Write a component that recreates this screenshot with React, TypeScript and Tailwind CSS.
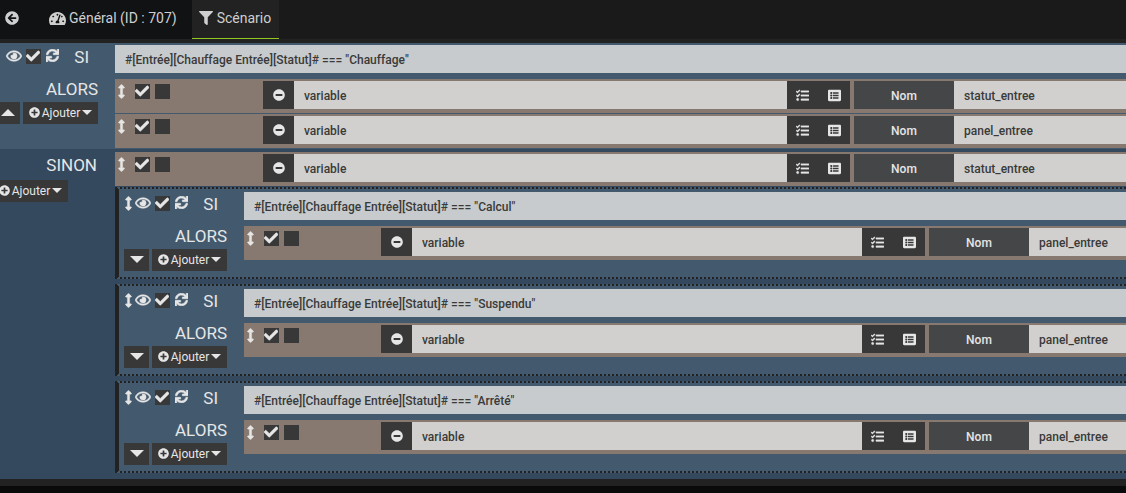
import { FaArrowCircleLeft, FaArrowsAltV, FaCheck, FaFilter, FaListAlt, FaMinusCircle, FaPlusCircle, FaRegEye, FaSync, FaTachometerAlt, FaTasks } from 'react-icons/fa';
import clsx from 'clsx';

interface Action {
  name: string;
  enabled: boolean;
}

interface Condition {
  id: string;
  expression: string;
  actions: Action[];
}

const mainCondition: Condition = {
  id: 'main',
  expression: '#[Entrée][Chauffage Entrée][Statut]# === "Chauffage"',
  actions: [
    { name: 'statut_entree', enabled: true },
    { name: 'panel_entree', enabled: true },
  ],
};

const subConditions: Condition[] = [
  {
    id: 'calcul',
    expression: '#[Entrée][Chauffage Entrée][Statut]# === "Calcul"',
    actions: [{ name: 'panel_entree', enabled: true }],
  },
  {
    id: 'suspendu',
    expression: '#[Entrée][Chauffage Entrée][Statut]# === "Suspendu"',
    actions: [{ name: 'panel_entree', enabled: true }],
  },
  {
    id: 'arrete',
    expression: '#[Entrée][Chauffage Entrée][Statut]# === "Arrêté"',
    actions: [{ name: 'panel_entree', enabled: true }],
  },
];

function CheckBox({ label, checked = false }: { label: string; checked?: boolean }) {
  return (
    <label className="relative block size-[15px] shrink-0">
      <input
        type="checkbox"
        aria-label={label}
        defaultChecked={checked}
        className="peer block size-full appearance-none bg-[#383838]"
      />
      <FaCheck className="pointer-events-none absolute top-0 left-0 hidden size-[14px] stroke-current stroke-[20px] peer-checked:block" />
    </label>
  );
}

function AddButton() {
  return (
    <button className="flex h-[22px] w-[75px] shrink-0 items-center justify-center bg-[#383838] pb-px text-xs">
      <FaPlusCircle className="mr-[2px] size-[11px]" />
      Ajouter
      <span className="ml-[2px] border-x-5 border-t-5 border-x-transparent border-t-current" />
    </button>
  );
}

function ActionRow({ action, nested }: { action: Action; nested?: boolean }) {
  return (
    <div className="flex h-[34px] bg-[#87796f] pt-[2px] pb-1">
      <div className={clsx('flex shrink-0 pt-[3px] pl-[3px]', nested ? 'w-[137px]' : 'w-[148px]')}>
        <FaArrowsAltV className="mr-[10px] h-[15px] w-[7px] stroke-current stroke-[16px]" />
        <CheckBox label="Activer l'action" checked={action.enabled} />
        <span className="w-[5px]" />
        <CheckBox label="Exécuter en parallèle" />
      </div>
      <button aria-label="Supprimer" className="flex w-[31px] shrink-0 items-center justify-center bg-[#383838]">
        <FaMinusCircle className="size-3" />
      </button>
      <input
        aria-label="Commande"
        defaultValue="variable"
        className="min-w-0 flex-1 bg-[#d1d0ce] px-[10px] pt-[2px] text-xs font-medium text-[#3a3a3a] outline-none"
      />
      <div className="mr-1 flex w-[63px] shrink-0 bg-[#383838]">
        <button aria-label="Choisir un mot-clé" className="flex flex-1 items-center justify-center">
          <FaTasks className="size-[13px] stroke-current stroke-[12px]" />
        </button>
        <button aria-label="Choisir une commande" className="flex flex-1 items-center justify-center">
          <FaListAlt className="size-[13px]" />
        </button>
      </div>
      <label className={clsx('flex shrink-0', nested ? 'w-[197px]' : 'w-[272px]')}>
        <span className="flex w-[100px] shrink-0 items-center justify-center bg-[#454648] pt-[2px] text-xs font-medium">
          Nom
        </span>
        <input
          defaultValue={action.name}
          className="min-w-0 flex-1 bg-[#d1d0ce] px-[10px] pt-[2px] text-xs font-medium text-[#3a3a3a] outline-none"
        />
      </label>
    </div>
  );
}

function ConditionBlock({ condition, nested }: { condition: Condition; nested?: boolean }) {
  return (
    <div className="flex">
      <div className={clsx('flex shrink-0 flex-col', nested ? 'w-[125px]' : 'w-[115px]')}>
        <div className="flex h-[28px] items-start pt-1 pr-[26px] pl-[6px]">
          {nested && <FaArrowsAltV className="mr-[3px] h-[15px] w-[7px] stroke-current stroke-[16px]" />}
          <FaRegEye className="h-[14px] w-4 stroke-current stroke-[20px]" />
          <span className="w-1" />
          <CheckBox label="Activer la condition" checked />
          <FaSync className="ml-[5px] size-[13px] stroke-current stroke-[24px]" />
          <span className="ml-auto text-[17px] leading-4">SI</span>
        </div>
        <div className="mt-[9px] mb-[7px] flex h-[13px] items-end justify-end pr-[17px] text-[17px] leading-3">ALORS</div>
        <div className="flex justify-end gap-[3px] pr-[17px]">
          <button
            aria-label={nested ? 'Déplier' : 'Replier'}
            className="flex h-[22px] w-[25px] shrink-0 items-center justify-center bg-[#383838] pb-[2px]"
          >
            {nested ? (
              <span className="border-x-7 border-t-7 border-x-transparent border-t-current" />
            ) : (
              <span className="border-x-7 border-b-7 border-x-transparent border-b-current" />
            )}
          </button>
          <AddButton />
        </div>
      </div>
      <div className="min-w-0 flex-1">
        <input
          aria-label="Expression"
          defaultValue={condition.expression}
          className="mb-[6px] block h-[28px] w-full bg-[#c7cbce] px-[10px] pt-[2px] text-xs font-medium text-[#3a3a3a] outline-none"
        />
        <div className="flex flex-col gap-px">
          {condition.actions.map((action) => (
            <ActionRow key={action.name} action={action} nested={nested} />
          ))}
        </div>
      </div>
    </div>
  );
}

export default function App() {
  return (
    <div className="flex min-h-screen flex-col overflow-hidden bg-[#0a0a0a] font-['Roboto',sans-serif] text-[#e6e6e6]">
      <nav className="flex h-[39px] bg-[#1a1a1a] text-sm text-[#cfcfcf]">
        <div className="flex bg-[#111214]">
          <a href="#retour" aria-label="Retour" className="flex w-[39px] items-center pb-[3px] pl-[5px]">
            <FaArrowCircleLeft className="size-[14px]" />
          </a>
          <a href="#general" className="flex items-center gap-[3px] pr-[15px] pb-[3px] pl-[10px]">
            <FaTachometerAlt className="size-[17px]" />
            Général (ID : 707)
          </a>
        </div>
        <a href="#scenario" className="flex items-center gap-1 border-b border-[#93c81e] bg-[#222222] pr-2 pb-[2px] pl-[7px]">
          <FaFilter className="size-[14px]" />
          Scénario
        </a>
      </nav>

      <main className="border-t-4 border-b-7 border-[#222222] bg-[#34495d]">
        <section className="bg-[#43596d] pt-[2px] pb-px">
          <ConditionBlock condition={mainCondition} />
        </section>

        <section className="flex pt-[3px] pb-[6px]">
          <div className="flex w-[115px] shrink-0 flex-col">
            <div className="flex h-7 items-center justify-end pr-[18px] text-[17px]">SINON</div>
            <div className="flex justify-end pr-[47px]">
              <AddButton />
            </div>
          </div>
          <div className="min-w-0 flex-1">
            <ActionRow action={{ name: 'statut_entree', enabled: true }} />
            <div className="mt-px flex flex-col gap-[5px]">
              {subConditions.map((condition) => (
                <div
                  key={condition.id}
                  className="border-y-2 border-l-4 border-[#222222] bg-[#43596d] pt-[3px] pb-[6px] [border-style:dotted_none_dotted_solid]"
                >
                  <ConditionBlock condition={condition} nested />
                </div>
              ))}
            </div>
          </div>
        </section>
      </main>
    </div>
  );
}
